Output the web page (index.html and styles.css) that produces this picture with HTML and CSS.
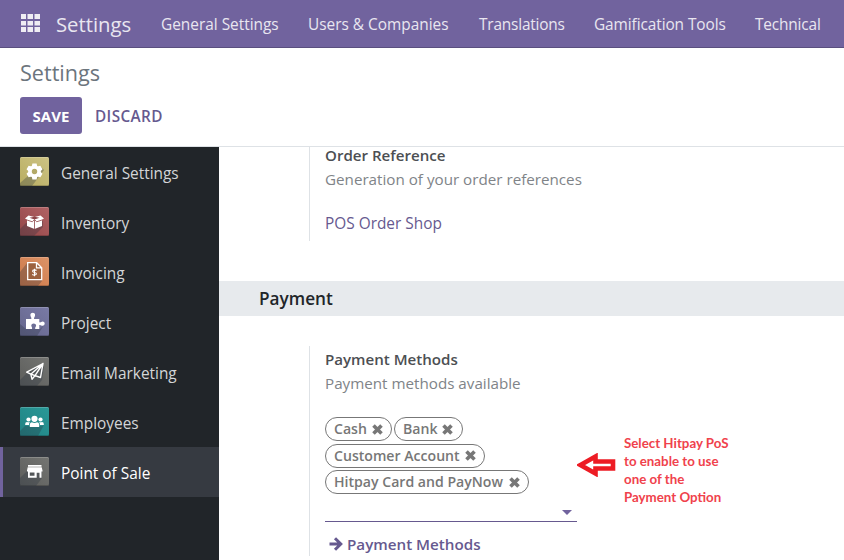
FILE: index.html
```html
<!DOCTYPE html>
<html lang="en">
<head>
<meta charset="utf-8">
<title>Settings</title>
<link rel="stylesheet" href="styles.css">
</head>
<body>
<header class="navbar">
  <svg class="apps" width="19" height="18" viewBox="0 0 19 18" fill="#efedf3"><path d="M0 0h5v5H0zM6.500 0h5.500v5H6.500zM13.500 0H19v5h-5.500zM0 7h5v4.500H0zM6.500 7h5.500v4.500H6.500zM13.500 7H19v4.500h-5.500zM0 13h5v5H0zM6.500 13h5.500v5H6.500zM13.500 13H19v5h-5.500z"/></svg>
  <span class="brand">Settings</span>
  <nav class="menu">
    <a class="m1">General Settings</a>
    <a class="m2">Users &amp; Companies</a>
    <a class="m3">Translations</a>
    <a class="m4">Gamification Tools</a>
    <a class="m5">Technical</a>
  </nav>
</header>
<section class="control">
  <h1>Settings</h1>
  <div class="buttons">
    <button class="save"><span>SAVE</span></button>
    <button class="discard"><span>DISCARD</span></button>
  </div>
</section>
<div class="body">
  <aside class="sidebar">
    <div class="tab"><svg class="icon gold" viewBox="0 0 29 29"><path class="shade" d="M8 19 20 9l4 4-12 16H0V26z"/><g fill="#fff"><circle cx="14.500" cy="14.500" r="6.200"/><path d="M12.400 6.500h4.200l.7 3h-5.600zM12.400 22.500h4.200l.7-3h-5.600z"/><path d="M12.400 6.500h4.200l.7 3h-5.600zM12.400 22.500h4.200l.7-3h-5.600z" transform="rotate(60 14.500 14.500)"/><path d="M12.400 6.500h4.200l.7 3h-5.600zM12.400 22.500h4.200l.7-3h-5.600z" transform="rotate(120 14.500 14.500)"/></g><circle cx="14.500" cy="14.500" r="2.700" fill="#b3aa68"/></svg><span>General Settings</span></div>
    <div class="tab"><svg class="icon red" viewBox="0 0 29 29"><path class="shade" d="M6 16 23 14v6l-9 9H0V22z"/><path fill="#fff" d="M8.500 8.500 14.500 10l6-1.500 3.500 3-2 1v6.500l-7.500 3-7.500-3v-6.500l-2-1z"/><path fill="#8d4447" d="m9.500 10.700 5-1 5 1-5 1.800z"/><path d="m7 13 5.300 1.800 2.200-2.300 2.200 2.300L22 13M14.500 13v9" fill="none" stroke="#8d4447" stroke-width=".8"/></svg><span>Inventory</span></div>
    <div class="tab"><svg class="icon orange" viewBox="0 0 29 29"><path class="shade" d="M7 6v17h15v1l-4 5H0V15z"/><path fill="#9c623f" d="M7.700 5.700h9l5 5v12h-14z"/><path d="M7.700 5.700h9l5 5v12h-14zM16.500 5.700v5.200h5.200" fill="none" stroke="#fff" stroke-width="1.300"/><path d="M16.500 13.500c-.8-.8-3.900-1-3.900.7s3.800 1 3.800 2.600c0 1.600-3.100 1.500-4.100.5M14.500 11.700v7.500" fill="none" stroke="#fff" stroke-width="1.100"/></svg><span>Invoicing</span></div>
    <div class="tab"><svg class="icon violet" viewBox="0 0 29 29"><path class="shade" d="M6 22h14l4-4-7 11H0V17z"/><path fill="#fff" d="M6 12h5.300c.6-1.400-.9-2-.9-4 0-3 4.700-3 4.700 0 0 2-1.500 2.600-1 4h5.200v3.300c1.300.5 2-.7 3.300-.7 2.800 0 2.800 4.200 0 4.200-1.300 0-2-1.200-3.300-.7v3.900h-4c-.7-1.300.8-2 .8-3.500 0-2.800-4.800-2.800-4.800 0 0 1.500 1.400 2.200.7 3.500H6z"/></svg><span>Project</span></div>
    <div class="tab"><svg class="icon gray" viewBox="0 0 29 29"><path class="shade" d="m7 16 15-9 2 3-2 13-5 6H0V23z"/><path d="M23 6.500 6.700 15.200l4.100 2 9.700 3.300zM23 6.500 10.800 17.200l1.200 5 3-3.600z" fill="none" stroke="#fff" stroke-width="1.400" stroke-linejoin="round"/></svg><span>Email Marketing</span></div>
    <div class="tab"><svg class="icon teal" viewBox="0 0 29 29"><path class="shade" d="M5 19h17l2-1-6 11H0V24z"/><g fill="#fff"><circle cx="14.500" cy="11.800" r="3.100"/><circle cx="8.500" cy="12.500" r="2.100"/><circle cx="20.500" cy="12.500" r="2.100"/><path d="M9.800 20v-2.200q0-2.300 2-2.500 2.700 1.200 5.400 0 2 .2 2 2.500V20zM5.200 18v-1q0-1.900 1.800-2 1.600.6 3 0-1 1.200-1 3zM23.800 18v-1q0-1.900-1.800-2-1.600.6-3 0 1 1.200 1 3z"/></g></svg><span>Employees</span></div>
    <div class="tab active"><svg class="icon gray" viewBox="0 0 29 29"><path class="shade" d="M7 14h15v7l-6 8H0V21z"/><path fill="#fff" d="M8 8h13.500v1.700H8zM7.700 10.300h14l.8 3.200v1h-1v6.200h-2v-5h-2.800v5H8v-6.200H7v-1zM9.800 15.500v3.200h4.700v-3.200z" fill-rule="evenodd"/></svg><span>Point of Sale</span></div>
  </aside>
  <main class="content">
    <section class="setting first">
      <h3>Order Reference</h3>
      <p>Generation of your order references</p>
      <a class="link">POS Order Shop</a>
    </section>
    <h2><span>Payment</span></h2>
    <section class="setting second">
      <h3>Payment Methods</h3>
      <p>Payment methods available</p>
      <div class="field">
        <div class="tags">
          <div class="tag w1"><span>Cash</span><svg viewBox="0 0 11 11"><path d="m1.500 1.500 8 8m0-8-8 8"/></svg></div>
          <div class="tag w2"><span>Bank</span><svg viewBox="0 0 11 11"><path d="m1.500 1.500 8 8m0-8-8 8"/></svg></div>
          <div class="tag w3"><span>Customer Account</span><svg viewBox="0 0 11 11"><path d="m1.500 1.500 8 8m0-8-8 8"/></svg></div>
          <div class="tag w4"><span>Hitpay Card and PayNow</span><svg viewBox="0 0 11 11"><path d="m1.500 1.500 8 8m0-8-8 8"/></svg></div>
        </div>
        <svg class="caret" width="10" height="5" viewBox="0 0 10 5"><path d="M0 0h10L5 5z" fill="#71639e"/></svg>
      </div>
      <a class="more"><svg width="14" height="14" viewBox="0 0 14 14"><path d="M.5 7H12M6 1.200 11.800 7 6 12.800" fill="none" stroke="#66598f" stroke-width="3"/></svg><span>Payment Methods</span></a>
    </section>
    <div class="note">
      <svg width="39" height="24" viewBox="0 0 39 24"><path d="M3.500 12 18.500 3.500v5h17.500v7h-17.500v5z" fill="#fff" stroke="#ed1c24" stroke-width="4.600"/></svg>
      <p><span>Select Hitpay PoS</span><span>to enable to use</span><span>one of the</span><span>Payment Option</span></p>
    </div>
  </main>
</div>
</body>
</html>
```
FILE: styles.css
```css
* { box-sizing: border-box; }
body { margin: 0; width: 844px; height: 560px; overflow: hidden; background: #fff; color: #4c4f53; font: 15.400px/24px "Open Sans", "Noto Sans", sans-serif; display: flex; flex-direction: column; }
h1, h2, h3, p { margin: 0; }
a, span { white-space: nowrap; }
.navbar { flex: none; height: 48px; background: #71639e; border-bottom: 1px solid #5a4f7f; display: flex; align-items: center; padding: 1px 0 0 21px; color: #e9e6f0; }
.apps { flex: none; margin-top: -3px; }
.brand { width: 105px; margin-left: 16px; font-size: 20.300px; }
.menu { display: flex; padding-top: 2px; }
.m1 { width: 147px; }
.m2 { width: 171px; }
.m3 { width: 115px; letter-spacing: -.18px; }
.m4 { width: 161px; letter-spacing: -.08px; }
.m5 { letter-spacing: -.15px; }
.control { flex: none; height: 99px; border-bottom: 1px solid #dee2e6; padding: 10px 20px; }
h1 { font-size: 21.600px; font-weight: 400; line-height: 30px; color: #6c757d; }
.buttons { display: flex; margin-top: 9px; }
button { border: 0; padding: 0; height: 37px; font: 600 15px "Open Sans", sans-serif; }
.save { width: 62px; border-radius: 3px; background: #71639e; color: #fff; font-weight: 700; }
.discard { margin-left: 13px; background: none; color: #66598f; font-size: 15.300px; letter-spacing: .4px; }
.body { flex: 1; min-height: 0; display: flex; }
.sidebar { width: 219px; background: #212529; color: #d3d5d7; }
.tab { height: 50px; display: flex; align-items: center; padding: 0 0 2px 20px; gap: 12px; border: 0 solid #71639e; }
.tab span { padding-top: 6px; }
.active { background: #363a41; border-left-width: 3px; padding-left: 17px; color: #fff; }
.icon { width: 29px; height: 29px; border-radius: 1.500px; box-shadow: inset 0 1px rgba(255,255,255,.2), inset 0 -1px rgba(0,0,0,.2); }
.shade { fill: #28323e; fill-opacity: .3; }
.gold { background: linear-gradient(45deg, #b8ad60, #cdc385); }
.red { background: linear-gradient(45deg, #934648, #b06264); }
.orange { background: linear-gradient(45deg, #cc7646, #dc9468); }
.violet { background: linear-gradient(45deg, #65668c, #797aa5); }
.gray { background: linear-gradient(45deg, #5c5d5b, #747572); }
.teal { background: linear-gradient(45deg, #218183, #299997); }
.content { flex: 1; position: relative; }
.setting { margin-left: 90px; border-left: 1px solid #dee2e6; padding-left: 15px; display: flex; flex-direction: column; align-items: flex-start; }
.first { height: 94px; margin-bottom: 40px; }
h3 { font-size: 15.100px; font-weight: 600; line-height: 24px; margin-top: -4px; }
.setting p { color: #808488; font-size: 15.200px; }
.link { color: #66598f; margin-top: 21px; }
h2 { height: 35px; line-height: 35px; background: #e7eaed; padding-left: 40px; font-size: 17.200px; font-weight: 600; color: #212529; }
.second { margin-top: 30px; height: 210px; padding-top: 5px; }
.field { width: 252px; height: 105px; margin-top: 22px; border-bottom: 1px solid #66598f; position: relative; }
.tags { display: flex; flex-wrap: wrap; gap: 2.500px 2px; }
.tag { height: 24px; border: 1.500px solid #777; border-radius: 12px; display: flex; align-items: center; justify-content: space-between; padding: 0 8px; font-size: 14.100px; font-weight: 600; color: #777; }
.tag svg { width: 11px; height: 11px; stroke: #777; stroke-width: 3.600; fill: none; }
.w1 { width: 67px; }
.w2 { width: 69px; padding-right: 9px; }
.w3 { width: 160px; }
.w4 { width: 204px; }
.caret { position: absolute; right: 5px; bottom: 6px; }
.more { display: flex; align-items: center; gap: 4px; margin: 10px 0 0 4px; color: #66598f; font-weight: 600; font-size: 15.200px; }
.note { position: absolute; left: 358px; top: 287px; display: flex; align-items: flex-start; gap: 8px; }
.note svg { margin-top: 19px; }
.note p { display: flex; flex-direction: column; font: 700 13.300px/18px Lato, sans-serif; color: #f0424c; }
```
